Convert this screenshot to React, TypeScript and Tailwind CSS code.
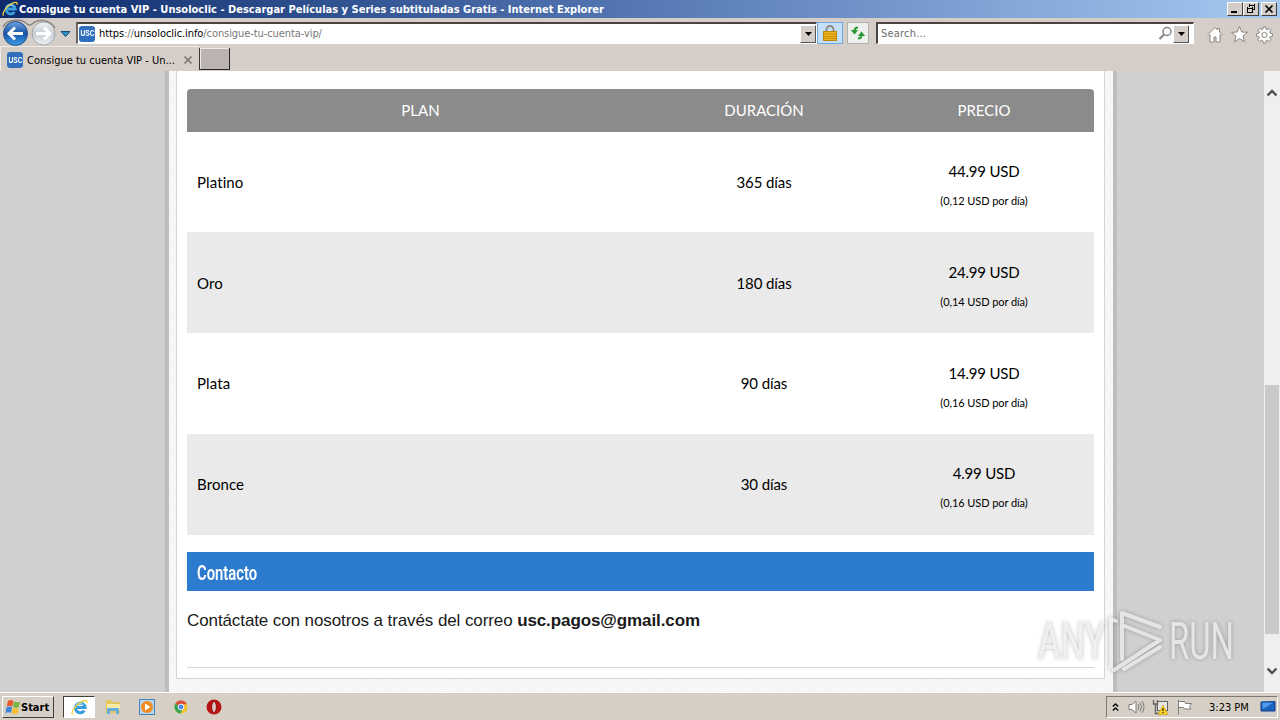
import type { ReactNode } from 'react';

interface Plan {
  name: string;
  duration: string;
  price: string;
  perDay: string;
}

const plans: Plan[] = [
  { name: 'Platino', duration: '365 días', price: '44.99 USD', perDay: '(0,12 USD por día)' },
  { name: 'Oro', duration: '180 días', price: '24.99 USD', perDay: '(0,14 USD por día)' },
  { name: 'Plata', duration: '90 días', price: '14.99 USD', perDay: '(0,16 USD por día)' },
  { name: 'Bronce', duration: '30 días', price: '4.99 USD', perDay: '(0,16 USD por día)' },
];

function IeLogo({ size }: { size: number }) {
  return (
    <svg width={size} height={size} viewBox="0 0 16 16" className="shrink-0">
      <path d="M12.500 11a4.600 4.600 0 1 1 .8-3H5" fill="none" stroke="#3a9fe0" strokeWidth="2.800" />
      <path d="M4.500 6.500a4 4 0 0 1 7-1" fill="none" stroke="#8fd4f8" strokeWidth="1" />
      <path d="M1.600 14.600C-.6 12.400 4.600 5.200 9.800 2.600 13 .8 15.800.9 14.800 3.800" fill="none" stroke="#f2cf3a" strokeWidth="1.300" />
    </svg>
  );
}

function UscIcon() {
  return (
    <div className="flex h-4 w-4 shrink-0 items-center justify-center rounded-[3px] bg-[#2f6fbb]">
      <span className="scale-x-[0.74] font-['Liberation_Sans'] text-[9px] leading-none font-bold text-white">USC</span>
    </div>
  );
}

function WinButton({ children }: { children: ReactNode }) {
  return (
    <div className="h-[14px] w-4 border border-t-white border-l-white border-r-[#404040] border-b-[#404040] bg-[#d5cec8]">
      <svg width="14" height="12" viewBox="0 0 14 12" fill="none" stroke="#000" shapeRendering="crispEdges">
        {children}
      </svg>
    </div>
  );
}

function DropButton() {
  return (
    <div className="flex h-[18px] w-4 shrink-0 items-center justify-center border border-t-white border-l-white border-r-[#555] border-b-[#555] bg-[#d5cec8]">
      <svg width="7" height="4" viewBox="0 0 7 4">
        <path d="M0 0h7L3.500 4z" fill="#000" />
      </svg>
    </div>
  );
}

function TitleBar() {
  return (
    <div className="flex h-[18px] shrink-0 items-center bg-linear-to-r from-[#0d2a6c] via-[#5578b4] to-[#a6caf0] pr-[3px] pl-0.5">
      <IeLogo size={16} />
      <span className="ml-px text-[11px] font-bold tracking-[0.013px] whitespace-nowrap text-white">
        Consigue tu cuenta VIP - Unsoloclic - Descargar Películas y Series subtituladas Gratis - Internet Explorer
      </span>
      <div className="ml-auto flex">
        <WinButton>
          <path d="M3 9h6" strokeWidth="2" />
        </WinButton>
        <WinButton>
          <path d="M5 2h6M5.500 1v3M10.500 1v6M9 6.500h2M3 5h6M3.500 4v6M8.500 4v6M3 9.500h6" />
        </WinButton>
        <div className="w-0.5" />
        <WinButton>
          <path d="M3.500 2.500l7 7M10.500 2.500l-7 7" strokeWidth="1.600" shapeRendering="auto" />
        </WinButton>
      </div>
    </div>
  );
}

function NavButtons() {
  return (
    <svg width="76" height="28" viewBox="0 0 76 28" className="shrink-0">
      <defs>
        <linearGradient id="back" x1="0" y1="0" x2="0" y2="1">
          <stop offset="0" stopColor="#6da2de" />
          <stop offset="0.5" stopColor="#1554a8" />
          <stop offset="1" stopColor="#3fa0ea" />
        </linearGradient>
        <linearGradient id="fwd" x1="0" y1="0" x2="0" y2="1">
          <stop offset="0" stopColor="#f2f4f6" />
          <stop offset="0.5" stopColor="#c6ccd2" />
          <stop offset="1" stopColor="#eef2f5" />
        </linearGradient>
      </defs>
      <path d="M3 9C7 1 21 0 27 6q2.500 2 5 0c7-6 18-4 23 4" fill="none" stroke="#8b8785" strokeWidth="1.500" />
      <circle cx="15.500" cy="15.500" r="12" fill="url(#back)" stroke="#284f87" />
      <path d="M23 15.500H10M15 9.500l-6 6 6 6" fill="none" stroke="#fff" strokeWidth="3" />
      <circle cx="43.500" cy="15.500" r="11.500" fill="url(#fwd)" stroke="#a1a5aa" />
      <path d="M36 15.500h13M44 9.500l6 6-6 6" fill="none" stroke="#fff" strokeWidth="3" />
      <path d="M61 13.500h9l-4.500 5z" fill="#2e8fc4" stroke="#1c4e74" />
    </svg>
  );
}

function Toolbar() {
  return (
    <div className="flex h-7 shrink-0 items-center">
      <NavButtons />
      <div className="mt-0.5 flex h-[22px] w-[741px] shrink-0 items-center border-t-2 border-r border-b border-l-2 border-t-[#4a4342] border-r-white border-b-white border-l-[#6b6462] bg-white pl-px">
        <UscIcon />
        <span className="ml-1 text-[11px] tracking-[-0.08px] whitespace-nowrap text-[#777]">
          <span className="text-black">https</span>://<span className="text-black">unsoloclic.info</span>/consigue-tu-cuenta-vip/
        </span>
        <div className="ml-auto">
          <DropButton />
        </div>
      </div>
      <div className="mt-0.5 flex h-[22px] w-[26px] shrink-0 items-center justify-center border border-[#6fa8dc] bg-[#c5dff8]">
        <svg width="14" height="16" viewBox="0 0 14 16">
          <path d="M3.500 7V4.500a3.500 3.500 0 0 1 7 0V7" fill="none" stroke="#8e8674" strokeWidth="1.800" />
          <rect x="0.500" y="6.500" width="13" height="9" fill="#efb41f" stroke="#b9860c" />
          <path d="M1 9h12M1 11.500h12M1 13.500h12" stroke="#c88e10" />
        </svg>
      </div>
      <div className="mt-0.5 ml-1 flex h-[22px] w-[22px] shrink-0 items-center justify-center border border-[#b5b0ac] bg-[#eef0ee]">
        <svg width="16" height="14" viewBox="0 0 16 14" fill="none" stroke="#2c9a35" strokeWidth="2">
          <path d="M8 1.500C5 1.500 4.500 3 4.500 5" />
          <path d="M0.800 4h7.400L4.500 8.500z" fill="#2c9a35" stroke="none" />
          <path d="M8 12.500c3 0 3.500-1.500 3.500-3.500" />
          <path d="M7.800 10h7.400L11.500 5.500z" fill="#2c9a35" stroke="none" />
        </svg>
      </div>
      <div className="mt-0.5 ml-[7px] flex h-[22px] w-[318px] shrink-0 items-center border-t-2 border-r border-b border-l-2 border-t-[#4a4342] border-r-white border-b-white border-l-[#4a4342] bg-white pr-1 pl-[3px]">
        <span className="text-[11px] tracking-[0.2px] text-[#6d6d6d]">Search...</span>
        <svg width="15" height="15" viewBox="0 0 15 15" className="ml-auto" fill="none" stroke="#858585">
          <circle cx="9" cy="5.500" r="4" strokeWidth="1.500" />
          <path d="M6 8.500L1.500 13" strokeWidth="2.200" />
        </svg>
        <DropButton />
      </div>
      <svg width="70" height="20" viewBox="0 0 70 20" className="mt-1.5 ml-3 shrink-0" fill="#fff" stroke="#8a8581">
        <path d="M2 9.500L9 2.500l2.500 2.500V3.500h2V7l2.500 2.500-1 1-1-.8V17h-4v-5H8v5H4V9.700l-1 .8z" />
        <path d="M33.500 1.500l2.200 5.500 5.800.3-4.500 3.700 1.500 5.700-5-3.200-5 3.200L30 11l-4.500-3.700 5.800-.3z" />
        <path d="M57.300 2h2.400l.4 2.200 1.400.6 1.800-1.300 1.700 1.700-1.300 1.800.6 1.400 2.200.4v2.400l-2.200.4-.6 1.400 1.300 1.800-1.700 1.700-1.800-1.300-1.400.6-.4 2.200h-2.400l-.4-2.200-1.400-.6-1.800 1.300-1.700-1.700 1.300-1.800-.6-1.400-2.200-.4V8.800l2.200-.4.6-1.400-1.300-1.800 1.700-1.700 1.800 1.300 1.400-.6z" />
        <circle cx="58.500" cy="10" r="2.600" />
      </svg>
    </div>
  );
}

function TabStrip() {
  return (
    <div className="flex h-[25px] shrink-0 items-start">
      <div className="flex h-[25px] w-[198px] items-center border-t border-l border-[#efebe7] pt-0.5 pl-1.5">
        <UscIcon />
        <span className="ml-1 text-[11px] whitespace-nowrap text-black">Consigue tu cuenta VIP - Un...</span>
        <svg width="8" height="8" viewBox="0 0 8 8" className="mr-1.5 ml-auto">
          <path d="M.5.5l7 7M7.500.5l-7 7" stroke="#857e7a" strokeWidth="1.800" />
        </svg>
      </div>
      <div className="mt-0.5 ml-px h-[22px] w-[31px] border-r border-b border-l border-r-[#2c2827] border-b-[#2c2827] border-l-[#3a3534] bg-[#bcb4b0] shadow-[inset_1px_1px_0_#efebe7]" />
    </div>
  );
}

function PricingTable() {
  return (
    <div className="font-[Lato,sans-serif] text-[15px] text-black [font-variant-ligatures:none]">
      <div className="grid h-[42.600px] grid-cols-[467px_220px_220px] items-center rounded-t-[4px] bg-[#8b8b8b] text-center text-white">
        <span>PLAN</span>
        <span>DURACIÓN</span>
        <span>PRECIO</span>
      </div>
      {plans.map((plan) => (
        <div
          key={plan.name}
          className="grid h-[100.750px] grid-cols-[467px_220px_220px] items-center text-center odd:bg-[#eaeaea] even:bg-white"
        >
          <span className="pt-px pl-2.5 text-left tracking-[0.1px]">{plan.name}</span>
          <span className="pt-px tracking-[-0.1px]">{plan.duration}</span>
          <div className="flex flex-col gap-[9px] pt-[7.200px]">
            <span className="leading-[22px] tracking-[-0.2px]">{plan.price}</span>
            <span className="text-[11px] leading-5 tracking-[-0.07px]">{plan.perDay}</span>
          </div>
        </div>
      ))}
    </div>
  );
}

function Watermark() {
  return (
    <svg
      width="250"
      height="80"
      viewBox="0 0 250 80"
      className="absolute top-[530px] left-[1030px] opacity-75 drop-shadow-[0_0_2px_rgba(0,0,0,0.35)]"
    >
      <g fill="#ececec" fontFamily="Roboto, sans-serif" fontSize="52">
        <text x="8" y="58" textLength="67" lengthAdjust="spacingAndGlyphs">
          ANY
        </text>
        <text x="139" y="58" textLength="65" lengthAdjust="spacingAndGlyphs">
          RUN
        </text>
      </g>
      <g fill="none" stroke="#ececec" strokeWidth="4" strokeLinejoin="round" strokeLinecap="round">
        <path d="M130 26L92 12v46M92 24l38 15-46 30" />
        <path d="M130 46L94 68" />
        <path d="M86 20l-5-2v48" />
      </g>
    </svg>
  );
}

function Page() {
  return (
    <div className="relative flex h-[621px] shrink-0 overflow-hidden bg-[#d0d0d0]">
      <div className="flex w-[1264px] justify-center pl-[18px]">
        <div className="w-[952px] border-x-4 border-[#bdbdbd] bg-[#f8f8f8] bg-[repeating-linear-gradient(45deg,#f3f3f3_0,#f3f3f3_1px,transparent_1px,transparent_3px)] pr-2 pl-[7px]">
          <div className="h-[608px] border border-t-0 border-[#d4d4d4] bg-white px-2.5 pt-[18px]">
            <PricingTable />
            <div className="mt-[17.400px] flex h-[39px] items-center bg-[#2d7bce] pt-[3px] pl-2.5">
              <h2 className="origin-left scale-x-[0.74] font-['Roboto'] text-[20px] font-semibold text-white">Contacto</h2>
            </div>
            <p className="mt-[18px] h-[59px] border-b border-[#d6d6d6] font-['Liberation_Sans'] text-[17px] leading-6 tracking-[-0.1px] text-[#1a1a1a]">
              Contáctate con nosotros a través del correo <strong>usc.pagos@gmail.com</strong>
            </p>
          </div>
        </div>
      </div>
      <div className="flex w-4 flex-col items-center bg-[#efefef] pt-[18px] pb-[17px]">
        <svg width="12" height="8" viewBox="0 0 12 8">
          <path d="M1.500 6.500L6 2l4.500 4.500" fill="none" stroke="#505050" strokeWidth="2.400" />
        </svg>
        <div className="mt-[288px] h-[249px] w-[14px] bg-[#cacaca]" />
        <svg width="12" height="8" viewBox="0 0 12 8" className="mt-auto">
          <path d="M1.500 1.500L6 6l4.500-4.500" fill="none" stroke="#505050" strokeWidth="2.400" />
        </svg>
      </div>
      <Watermark />
    </div>
  );
}

function Taskbar() {
  return (
    <div className="flex h-[28px] shrink-0 items-center border-t border-white bg-[#d5cfc6] pt-px pl-0.5">
      <div className="flex h-[22px] w-[52px] items-center border border-t-white border-r-[#404040] border-b-[#404040] border-l-white pl-0.5">
        <svg width="16" height="16" viewBox="0 0 16 16" className="shrink-0">
          <path d="M3 2q2.500-1.800 5.500 0L7.300 7.500q-2.500-1.500-5.500 0z" fill="#e8582b" />
          <path d="M9 2.500q2.500 1.500 6 .2L14 8q-3 1.500-6 0z" fill="#79b640" />
          <path d="M1.600 8.200q2.500-1.500 5.500 0l-1.200 5.800q-2.500-1.500-5.500 0z" fill="#3b86d6" />
          <path d="M7.700 8.800q2.500 1.500 6 .2l-1 5.300q-2.500 1.500-6 0z" fill="#f6bd2c" />
        </svg>
        <span className="text-[11px] font-bold text-black">Start</span>
      </div>
      <div className="ml-[9px] flex h-[22px] w-8 items-center justify-center border border-t-[#404040] border-r-white border-b-white border-l-[#404040] bg-white">
        <IeLogo size={17} />
      </div>
      <svg width="16" height="16" viewBox="0 0 16 16" className="ml-2.5">
        <path d="M1 3V1h5l1.500 2H15v11H1z" fill="#e3c65c" />
        <path d="M2 5h13v6H2z" fill="#f8eaa4" />
        <path d="M2 9h12v6h-3v-3H5v3H2z" fill="#65aede" />
      </svg>
      <svg width="16" height="16" viewBox="0 0 16 16" className="ml-[18px]">
        <rect x="0.500" y="0.500" width="15" height="15" fill="#b6d6f0" stroke="#4b83b6" />
        <circle cx="8" cy="8" r="6" fill="#f28a1c" />
        <path d="M6 4.500v7l5.500-3.500z" fill="#fff" />
      </svg>
      <svg width="14" height="14" viewBox="0 0 16 16" className="ml-[19px]">
        <circle cx="8" cy="8" r="7.500" fill="#f4c52d" />
        <path d="M8 8L1.500 4.300A7.500 7.500 0 0 1 14.700 4.800H8z" fill="#dd4b3a" />
        <path d="M8 8L1.500 4.300A7.500 7.500 0 0 0 7.500 15.500l3-6z" fill="#35a353" />
        <circle cx="8" cy="8" r="3.300" fill="#4786e8" stroke="#fff" />
      </svg>
      <svg width="16" height="16" viewBox="0 0 16 16" className="ml-[18px]">
        <circle cx="8" cy="8" r="7.500" fill="#b81414" />
        <ellipse cx="8" cy="8" rx="2.300" ry="5.500" fill="#f3e6e3" stroke="#7e0909" />
        <path d="M8 4v8" stroke="#c9a7a2" />
      </svg>
      <div className="mr-0.5 ml-auto flex h-[22px] w-[172px] items-center border border-t-[#807a74] border-r-white border-b-white border-l-[#807a74] pl-[5px]">
        <svg width="7" height="9" viewBox="0 0 7 9" fill="none" stroke="#000" strokeWidth="1.300">
          <path d="M.8 3.500l2.700-2.500 2.700 2.500M.8 7.500l2.700-2.500 2.700 2.500" />
        </svg>
        <svg width="17" height="16" viewBox="0 0 17 16" className="ml-[9px]" fill="#fff" stroke="#807d7a">
          <path d="M1 5.500h3L8 2v12l-4-3.500H1z" />
          <path d="M10 5q2 3 0 6M12 3.500q3 4.500 0 9M14 2q4 6 0 12" fill="none" />
        </svg>
        <svg width="17" height="16" viewBox="0 0 17 16" className="ml-[7px]">
          <rect x="5.500" y="2.500" width="10" height="9" fill="#e8e8e8" stroke="#66625f" />
          <path d="M1.500 1v4h4V1M3.500 5v9.500h4" fill="none" stroke="#66625f" strokeWidth="1.400" />
          <path d="M11 6l5 9.500H6z" fill="#fbd02b" stroke="#c99b12" strokeWidth=".6" />
          <path d="M11 9v3M11 13v1.200" stroke="#000" />
        </svg>
        <svg width="17" height="16" viewBox="0 0 17 16" className="ml-[7px]" fill="#fff" stroke="#807d7a">
          <path d="M2.500 1v14.500M2.500 2.500h6l1 2h6l-2 3 1.500 2.500H8.500l-1-1.500h-5" />
        </svg>
        <span className="ml-4 text-[11px] whitespace-nowrap text-black">3:23 PM</span>
        <svg width="16" height="14" viewBox="0 0 16 14" className="mt-0.5 mr-px ml-auto shrink-0">
          <path d="M1 1l14-.5v9.500L1 10z" fill="#1c63c0" stroke="#0f3f86" />
          <path d="M2 2l11-.5L3 8z" fill="#4f9be8" />
          <path d="M4 12.500h9" stroke="#c9d2da" strokeWidth="1.500" />
        </svg>
      </div>
    </div>
  );
}

export default function App() {
  return (
    <div className="flex h-[720px] w-[1280px] flex-col overflow-hidden bg-[#d5cec8] font-['DejaVu_Sans_Condensed','DejaVu_Sans',sans-serif] leading-none">
      <TitleBar />
      <Toolbar />
      <TabStrip />
      <Page />
      <Taskbar />
    </div>
  );
}
